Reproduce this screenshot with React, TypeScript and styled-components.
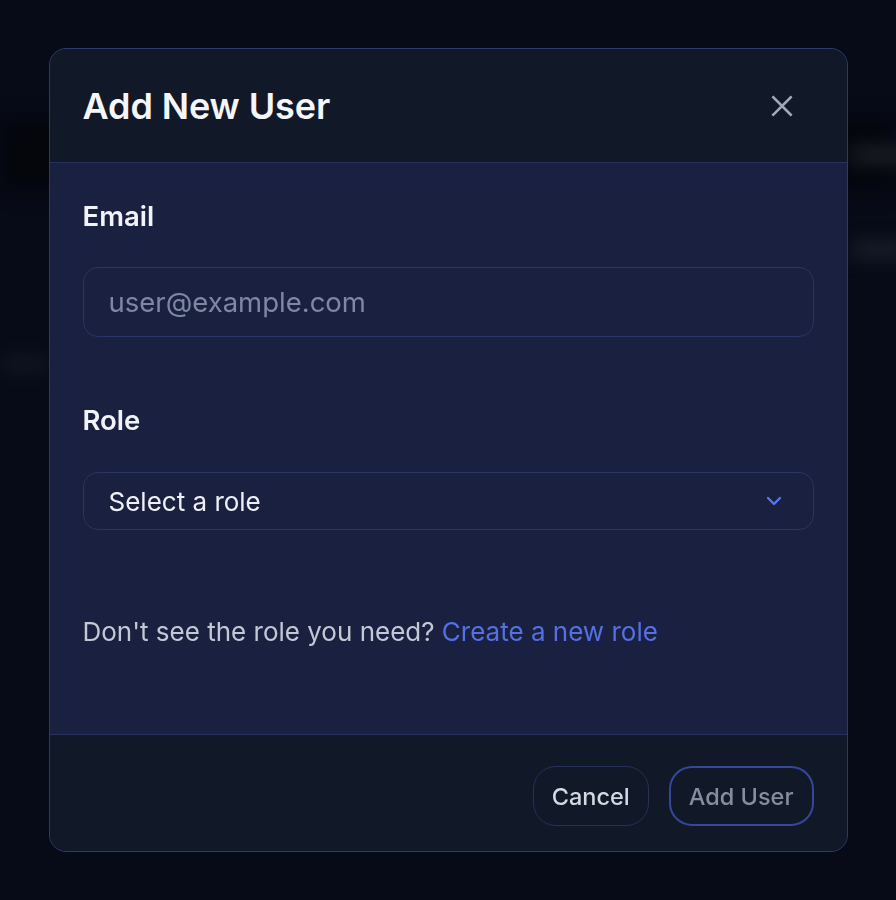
import React from "react";
import styled, { createGlobalStyle } from "styled-components";

const Global = createGlobalStyle`
  html, body { margin: 0; padding: 0; background: #070a17; }
  body { font-family: Inter, "Noto Sans", sans-serif; -webkit-font-smoothing: antialiased; }
  * { box-sizing: border-box; }
`;

const Screen = styled.div`
  position: relative;
  width: 896px;
  height: 900px;
  overflow: hidden;
  background: #070a17;
  display: flex;
  justify-content: center;
  padding-top: 48px;
`;

const Backdrop = styled.div`
  position: absolute;
  inset: 0;
  filter: blur(10px);
  pointer-events: none;
`;

const BlurBand = styled.div<{ $top: number; $left: number; $w: number; $h: number; $c: string }>`
  position: absolute;
  top: ${(p) => p.$top}px;
  left: ${(p) => p.$left}px;
  width: ${(p) => p.$w}px;
  height: ${(p) => p.$h}px;
  background: ${(p) => p.$c};
  border-radius: 6px;
`;

const Modal = styled.div`
  position: relative;
  width: 799px;
  height: 804px;
  background: #1a2140;
  border: 1.5px solid #2d3a6c;
  border-radius: 17px;
  overflow: hidden;
  display: flex;
  flex-direction: column;
`;

const Header = styled.div`
  height: 114px;
  flex: none;
  background: #111827;
  border-bottom: 1.5px solid #27325c;
  display: flex;
  align-items: center;
  justify-content: space-between;
  padding: 0 48px 0 33px;
`;

const Title = styled.h2`
  margin: 0;
  font-size: 36px;
  font-weight: 600;
  color: #f4f6fa;
  letter-spacing: -0.1px;
`;

const CloseButton = styled.button`
  background: none;
  border: none;
  padding: 0;
  width: 34px;
  height: 34px;
  display: flex;
  align-items: center;
  justify-content: center;
  color: #a1a9b8;
  cursor: pointer;
`;

const Body = styled.div`
  flex: 1;
  display: flex;
  flex-direction: column;
  padding: 37px 33px 0 33px;
`;

const Label = styled.label<{ $mt?: number }>`
  display: block;
  margin-top: ${(p) => p.$mt ?? 0}px;
  font-size: 27.5px;
  line-height: 32px;
  font-weight: 600;
  color: #f1f3f8;
`;

const Input = styled.input`
  margin-top: 35px;
  width: 100%;
  height: 70px;
  border-radius: 15px;
  border: 1.5px solid #283566;
  background: #1a2140;
  padding: 0 25px;
  font-family: Inter, "Noto Sans", sans-serif;
  font-size: 27.5px;
  color: #e6e9f0;
  outline: none;
  &::placeholder { color: #7d88a2; }
`;

const Select = styled.div`
  margin-top: 36px;
  width: 100%;
  height: 58px;
  border-radius: 15px;
  border: 1.5px solid #283566;
  background: #1a2140;
  padding: 0 31px 0 25px;
  display: flex;
  align-items: center;
  justify-content: space-between;
  font-size: 26px;
  color: #eef0f5;
`;

const Helper = styled.p`
  margin: 86px 0 0;
  font-size: 26px;
  line-height: 32px;
  color: #c3c8d4;
`;

const Link = styled.a`
  color: #5470e3;
  text-decoration: none;
`;

const Footer = styled.div`
  height: 117px;
  flex: none;
  background: #111827;
  border-top: 1.5px solid #27325c;
  display: flex;
  justify-content: flex-end;
  align-items: flex-start;
  gap: 20px;
  padding: 31px 33px 0;
`;

const Button = styled.button<{ $primary?: boolean }>`
  height: 60px;
  padding: 0 18px;
  border-radius: 23px;
  background: #111827;
  border: ${(p) => (p.$primary ? "2px solid #34479a" : "1.5px solid #263259")};
  color: ${(p) => (p.$primary ? "#858da0" : "#d3d8e2")};
  font-family: Inter, "Noto Sans", sans-serif;
  font-size: 23.5px;
  font-weight: 500;
  cursor: pointer;
`;

export default function App() {
  return (
    <>
      <Global />
      <Screen>
        <Backdrop>
          <BlurBand $top={120} $left={0} $w={896} $h={70} $c="#04060c" />
          <BlurBand $top={150} $left={850} $w={60} $h={10} $c="#2e313a" />
          <BlurBand $top={245} $left={850} $w={60} $h={10} $c="#2a2e38" />
          <BlurBand $top={360} $left={0} $w={50} $h={8} $c="#1e2230" />
        </Backdrop>
        <Modal>
          <Header>
            <Title>Add New User</Title>
            <CloseButton aria-label="Close">
              <svg width="30" height="30" viewBox="0 0 24 24" fill="none" stroke="currentColor" strokeWidth="2" strokeLinecap="square">
                <path d="M5 5 L19 19 M19 5 L5 19" />
              </svg>
            </CloseButton>
          </Header>
          <Body>
            <Label>Email</Label>
            <Input placeholder="user@example.com" />
            <Label $mt={67}>Role</Label>
            <Select>
              <span>Select a role</span>
              <svg width="16" height="10" viewBox="0 0 16 10" fill="none" stroke="#5b74e8" strokeWidth="2.4" strokeLinecap="round" strokeLinejoin="round">
                <path d="M2 2 L8 8 L14 2" />
              </svg>
            </Select>
            <Helper>
              Don't see the role you need? <Link href="#">Create a new role</Link>
            </Helper>
          </Body>
          <Footer>
            <Button>Cancel</Button>
            <Button $primary>Add User</Button>
          </Footer>
        </Modal>
      </Screen>
    </>
  );
}
